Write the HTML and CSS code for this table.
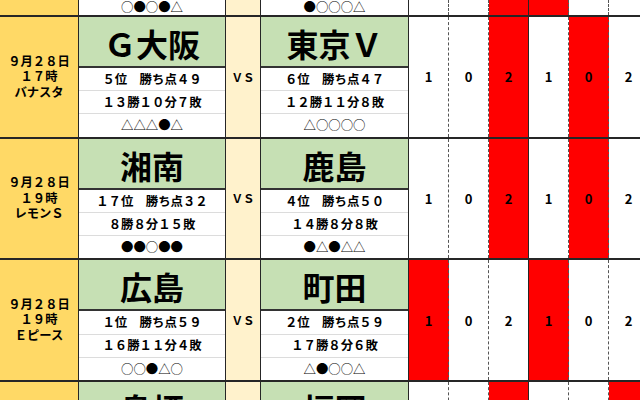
FILE: index.html
```html
<!DOCTYPE html>
<html lang="ja">
<head>
<meta charset="utf-8">
<title>試合予想</title>
<link rel="stylesheet" href="styles.css">
</head>
<body>
<div class="sheet">
  <div class="match match--tail">
    <div class="date"></div>
    <div class="team"><div class="team-row team-row--form">○●○●△</div></div>
    <div class="vs"></div>
    <div class="team team--b"><div class="team-row team-row--form">●○○○△</div></div>
    <div class="res"></div><div class="res"></div><div class="res res--hit res--split"></div><div class="res res--hit"></div><div class="res"></div><div class="res"></div>
  </div>

  <div class="match">
    <div class="date"><span class="date-line">９月２８日</span><span class="date-line">１７時</span><span class="date-line">バナスタ</span></div>
    <div class="team">
      <div class="team-name">Ｇ大阪</div>
      <div class="team-row">５位　勝ち点４９</div>
      <div class="team-row">１３勝１０分７敗</div>
      <div class="team-row team-row--form">△△△●△</div>
    </div>
    <div class="vs">ＶＳ</div>
    <div class="team team--b">
      <div class="team-name">東京Ｖ</div>
      <div class="team-row">６位　勝ち点４７</div>
      <div class="team-row">１２勝１１分８敗</div>
      <div class="team-row team-row--form">△○○○○</div>
    </div>
    <div class="res">1</div><div class="res">0</div><div class="res res--hit res--split">2</div><div class="res">1</div><div class="res res--hit">0</div><div class="res">2</div>
  </div>

  <div class="match">
    <div class="date"><span class="date-line">９月２８日</span><span class="date-line">１９時</span><span class="date-line">レモンＳ</span></div>
    <div class="team">
      <div class="team-name">湘南</div>
      <div class="team-row">１７位　勝ち点３２</div>
      <div class="team-row">８勝８分１５敗</div>
      <div class="team-row team-row--form">●●○●●</div>
    </div>
    <div class="vs">ＶＳ</div>
    <div class="team team--b">
      <div class="team-name">鹿島</div>
      <div class="team-row">４位　勝ち点５０</div>
      <div class="team-row">１４勝８分８敗</div>
      <div class="team-row team-row--form">●△●△△</div>
    </div>
    <div class="res">1</div><div class="res">0</div><div class="res res--hit res--split">2</div><div class="res">1</div><div class="res res--hit">0</div><div class="res">2</div>
  </div>

  <div class="match">
    <div class="date"><span class="date-line">９月２８日</span><span class="date-line">１９時</span><span class="date-line">Ｅピース</span></div>
    <div class="team">
      <div class="team-name">広島</div>
      <div class="team-row">１位　勝ち点５９</div>
      <div class="team-row">１６勝１１分４敗</div>
      <div class="team-row team-row--form">○○●△○</div>
    </div>
    <div class="vs">ＶＳ</div>
    <div class="team team--b">
      <div class="team-name">町田</div>
      <div class="team-row">２位　勝ち点５９</div>
      <div class="team-row">１７勝８分６敗</div>
      <div class="team-row team-row--form">△●○○△</div>
    </div>
    <div class="res res--hit">1</div><div class="res">0</div><div class="res res--split">2</div><div class="res res--hit">1</div><div class="res">0</div><div class="res">2</div>
  </div>

  <div class="match match--head">
    <div class="date"></div>
    <div class="team"><div class="team-name">鳥栖</div></div>
    <div class="vs"></div>
    <div class="team team--b"><div class="team-name">福岡</div></div>
    <div class="res"></div><div class="res"></div><div class="res res--hit res--split"></div><div class="res"></div><div class="res"></div><div class="res res--hit"></div>
  </div>
</div>
</body>
</html>
```
FILE: styles.css
```css
html, body {
  margin: 0;
  padding: 0;
  background: #ffffff;
}
body {
  width: 640px;
  height: 400px;
  overflow: hidden;
  font-family: "Noto Sans CJK JP", "Noto Sans", sans-serif;
  color: #000;
}
.sheet {
  display: flex;
  flex-direction: column;
  width: 649px;
}
.match {
  display: flex;
  flex: none;
  height: 121.67px;
  box-sizing: border-box;
  border-bottom: 2px solid #262626;
}
.match--tail {
  height: 17px;
}
.match--head {
  height: 60px;
  border-bottom: none;
}
.date {
  width: 79px;
  flex: none;
  box-sizing: border-box;
  border-right: 1px solid #262626;
  background: #ffd966;
  display: flex;
  flex-direction: column;
  align-items: center;
  justify-content: center;
  text-align: center;
  font-size: 12.3px;
  font-weight: 700;
}
.date-line {
  display: block;
  height: 15.5px;
  line-height: 15.5px;
}
.team {
  width: 147px;
  flex: none;
  box-sizing: border-box;
  border-right: 1px solid #262626;
  display: flex;
  flex-direction: column;
}
.team--b {
  width: 148px;
}
.team-name {
  height: 51px;
  flex: none;
  box-sizing: border-box;
  border-bottom: 2px solid #333;
  background: #c6e0b4;
  display: flex;
  align-items: center;
  justify-content: center;
  font-size: 32px;
  font-weight: 700;
  line-height: 1;
  padding-top: 3px;
}
.match--head .team-name {
  border-bottom: none;
  height: 60px;
  align-items: flex-start;
  padding-top: 10px;
}
.team-row {
  flex: 1;
  display: flex;
  align-items: center;
  justify-content: center;
  font-size: 12.4px;
  font-weight: 700;
  line-height: 1;
  border-bottom: 1px solid #dcdcdc;
}
.team-row:last-child {
  border-bottom: none;
}
.team-row--form {
  font-weight: 400;
}
.vs {
  width: 35px;
  flex: none;
  box-sizing: border-box;
  border-right: 1px solid #262626;
  background: #fff2cc;
  display: flex;
  align-items: center;
  justify-content: center;
  font-size: 11.5px;
  font-weight: 700;
}
.res {
  width: 40px;
  flex: none;
  box-sizing: border-box;
  border-right: 1px dashed #555;
  display: flex;
  align-items: center;
  justify-content: center;
  font-size: 13px;
  font-weight: 700;
}
.res--hit {
  background: #ff0000;
}
.res--split {
  border-right: 1px solid #262626;
}
```
